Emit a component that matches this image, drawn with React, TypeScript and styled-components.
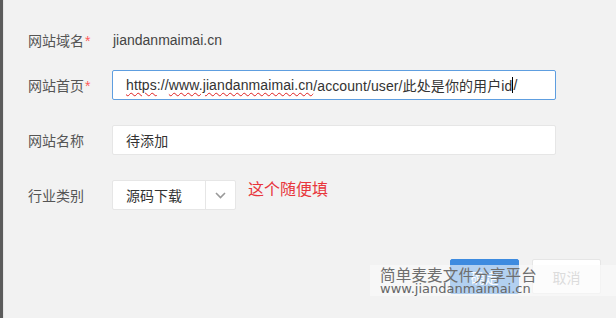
import React from "react";
import styled, { createGlobalStyle } from "styled-components";

const Global = createGlobalStyle`
  html, body { margin: 0; padding: 0; background: #f2f2f2; }
  * { box-sizing: border-box; }
`;

const Page = styled.div`
  position: relative;
  width: 616px;
  height: 318px;
  display: flex;
  background: #f2f2f2;
  font-family: "Liberation Sans", "Noto Sans CJK SC", sans-serif;
  overflow: hidden;
`;

const Edge = styled.div`
  width: 4px;
  flex: none;
  background: #5c5c5c;
  border-right: 1px solid #e6e6e6;
`;

const Main = styled.div`
  flex: 1;
  display: flex;
  flex-direction: column;
  padding: 25px 15px 0 24px;
`;

const Form = styled.div`
  display: flex;
  flex-direction: column;
  gap: 25px;
`;

const Row = styled.div<{ $static?: boolean }>`
  display: flex;
  align-items: center;
  height: 30px;
  margin-bottom: ${(p) => (p.$static ? "-10px" : "0")};
`;

const Label = styled.div`
  width: 84px;
  flex: none;
  font-size: 14px;
  color: #555;
`;

const Star = styled.span`
  color: #ff5a5a;
  margin-left: 1px;
`;

const Static = styled.div`
  font-size: 14px;
  color: #444;
  padding-left: 1px;
`;

const Field = styled.div<{ $focus?: boolean }>`
  width: 444px;
  height: 30px;
  display: flex;
  align-items: center;
  padding-left: 13px;
  background: #fff;
  border: 1px solid ${(p) => (p.$focus ? "#5e9ee0" : "#e6e6e6")};
  border-radius: 2px;
  font-size: 14px;
  color: #333;
  white-space: nowrap;
  letter-spacing: 0.1px;
`;

const Wavy = styled.span`
  text-decoration: underline wavy #e02020;
  text-decoration-thickness: 1px;
  text-underline-offset: 2px;
`;

const Caret = styled.span`
  display: inline-block;
  width: 1px;
  height: 16px;
  background: #000;
  vertical-align: middle;
`;

const Select = styled.div`
  width: 124px;
  height: 30px;
  display: flex;
  background: #fff;
  border: 1px solid #e6e6e6;
  border-radius: 2px;
`;

const SelectValue = styled.div`
  flex: 1;
  display: flex;
  align-items: center;
  padding-left: 13px;
  font-size: 14px;
  color: #333;
`;

const SelectArrow = styled.div`
  width: 30px;
  border-left: 1px solid #e6e6e6;
  display: flex;
  align-items: center;
  justify-content: center;
`;

const Hint = styled.div`
  margin-left: 12px;
  font-size: 16px;
  color: #e8363c;
  margin-top: -14px;
`;

const Footer = styled.div`
  display: flex;
  justify-content: flex-end;
  gap: 13px;
  margin-top: 49px;
`;

const Button = styled.div<{ $primary?: boolean }>`
  width: 69px;
  height: 35px;
  display: flex;
  align-items: center;
  justify-content: center;
  border-radius: 2px;
  font-size: 14px;
  background: ${(p) => (p.$primary ? "#3d8be0" : "#fff")};
  color: ${(p) => (p.$primary ? "#fff" : "#aaa")};
  border: 1px solid ${(p) => (p.$primary ? "#3d8be0" : "#e6e6e6")};
`;

const Watermark = styled.div`
  position: absolute;
  left: 370px;
  top: 265px;
  width: 246px;
  height: 31px;
  background: rgba(250, 250, 250, 0.62);
  padding-left: 10px;
  display: flex;
  flex-direction: column;
  justify-content: center;
`;

const WmTitle = styled.div`
  font-family: "Noto Sans CJK SC", sans-serif;
  font-size: 15.5px;
  line-height: 16px;
  color: #6e6e6e;
  letter-spacing: 0.2px;
`;

const WmUrl = styled.div`
  font-family: "DejaVu Sans", sans-serif;
  font-size: 13px;
  line-height: 13px;
  color: #666;
`;

export default function App() {
  return (
    <Page>
      <Global />
      <Edge />
      <Main>
        <Form>
          <Row $static>
            <Label>
              网站域名<Star>*</Star>
            </Label>
            <Static>jiandanmaimai.cn</Static>
          </Row>
          <Row>
            <Label>
              网站首页<Star>*</Star>
            </Label>
            <Field $focus>
              <Wavy>https</Wavy>://<Wavy>www.jiandanmaimai.cn</Wavy>
              /account/user/此处是你的用户id<Caret />/
            </Field>
          </Row>
          <Row>
            <Label>网站名称</Label>
            <Field>待添加</Field>
          </Row>
          <Row>
            <Label>行业类别</Label>
            <Select>
              <SelectValue>源码下载</SelectValue>
              <SelectArrow>
                <svg width="11" height="7" viewBox="0 0 11 7">
                  <path d="M1 1l4.5 4.5L10 1" fill="none" stroke="#999" strokeWidth="1.6" />
                </svg>
              </SelectArrow>
            </Select>
            <Hint>这个随便填</Hint>
          </Row>
        </Form>
        <Footer>
          <Button $primary>确定</Button>
          <Button>取消</Button>
        </Footer>
      </Main>
      <Watermark>
        <WmTitle>简单麦麦文件分享平台</WmTitle>
        <WmUrl>www.jiandanmaimai.cn</WmUrl>
      </Watermark>
    </Page>
  );
}
